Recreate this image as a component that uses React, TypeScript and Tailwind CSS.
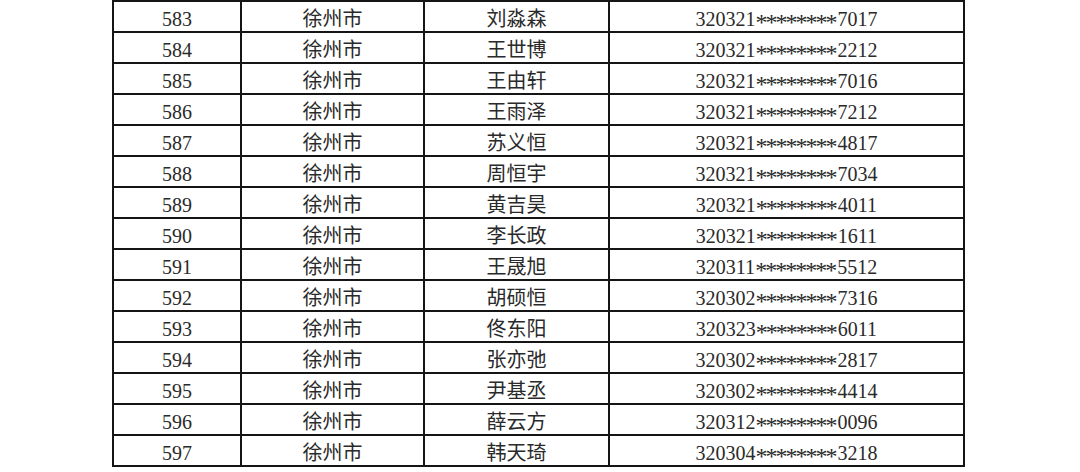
const rows: [string, string, string][] = [
  ["583", "刘淼森", "320321********7017"],
  ["584", "王世博", "320321********2212"],
  ["585", "王由轩", "320321********7016"],
  ["586", "王雨泽", "320321********7212"],
  ["587", "苏义恒", "320321********4817"],
  ["588", "周恒宇", "320321********7034"],
  ["589", "黄吉昊", "320321********4011"],
  ["590", "李长政", "320321********1611"],
  ["591", "王晟旭", "320311********5512"],
  ["592", "胡硕恒", "320302********7316"],
  ["593", "佟东阳", "320323********6011"],
  ["594", "张亦弛", "320302********2817"],
  ["595", "尹基丞", "320302********4414"],
  ["596", "薛云方", "320312********0096"],
  ["597", "韩天琦", "320304********3218"],
];

const cell = "flex items-center justify-center border-l-2 border-[#151515] pt-[5px]";

// ID number with masked middle part; the stars are big and sit mid-height, as in the printed font
function IdNumber({ value }: { value: string }) {
  const head = value.slice(0, 6);
  const tail = value.slice(14);
  return (
    <span className="whitespace-pre">
      {head}
      <span className="text-[24px] leading-[0] tracking-[-2px] align-[-4px]">********</span>
      <span className="ml-[2px]">{tail}</span>
    </span>
  );
}

export default function App() {
  return (
    <div className="w-[1080px] h-[472px] bg-white overflow-hidden">
      <div
        className="ml-[112px] w-[853px] border-t-2 border-[#151515] text-[20px] text-[#2a2a2a] leading-none"
        style={{ fontFamily: '"Liberation Serif", "Noto Sans CJK SC", serif' }}
      >
        {rows.map(([no, name, id]) => (
          <div key={no} className="flex h-[31px] border-b-2 border-[#151515]">
            <div className={`${cell} w-[128px]`}>{no}</div>
            <div className={`${cell} w-[183px]`}>徐州市</div>
            <div className={`${cell} w-[185px]`}>{name}</div>
            <div className={`${cell} w-[357px] border-r-2`}>
              <IdNumber value={id} />
            </div>
          </div>
        ))}
      </div>
    </div>
  );
}
